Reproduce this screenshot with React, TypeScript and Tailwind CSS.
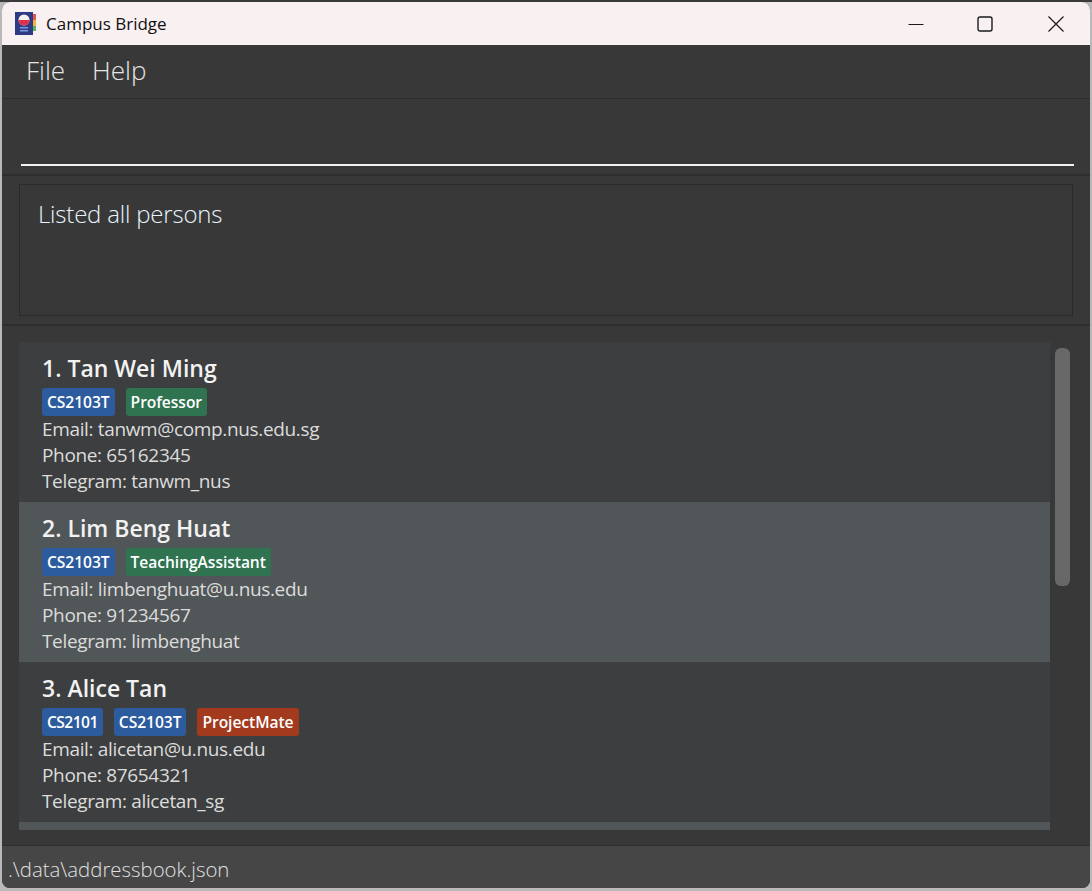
const font = { fontFamily: '"Open Sans", "Noto Sans", sans-serif' };

type Tag = { label: string; color: string; tight?: boolean };
type Person = { name: string; tags: Tag[]; email: string; phone: string; telegram: string };

const BLUE = "bg-[#2d5c9e]";
const GREEN = "bg-[#2f7350]";
const RED = "bg-[#a33a1e]";

const people: Person[] = [
  {
    name: "1. Tan Wei Ming",
    tags: [
      { label: "CS2103T", color: BLUE },
      { label: "Professor", color: GREEN },
    ],
    email: "tanwm@comp.nus.edu.sg",
    phone: "65162345",
    telegram: "tanwm_nus",
  },
  {
    name: "2. Lim Beng Huat",
    tags: [
      { label: "CS2103T", color: BLUE },
      { label: "TeachingAssistant", color: GREEN },
    ],
    email: "limbenghuat@u.nus.edu",
    phone: "91234567",
    telegram: "limbenghuat",
  },
  {
    name: "3. Alice Tan",
    tags: [
      { label: "CS2101", color: BLUE, tight: true },
      { label: "CS2103T", color: BLUE },
      { label: "ProjectMate", color: RED },
    ],
    email: "alicetan@u.nus.edu",
    phone: "87654321",
    telegram: "alicetan_sg",
  },
];

function AppIcon() {
  return (
    <svg width="21" height="24" viewBox="0 0 21 24" className="shrink-0">
      <rect x="0" y="0" width="18" height="23" fill="#2f3a85" />
      <rect x="18" y="2" width="3" height="6" fill="#e2574c" />
      <rect x="18" y="8" width="3" height="6" fill="#f2b33d" />
      <rect x="18" y="14" width="3" height="5" fill="#5bb35f" />
      <circle cx="9" cy="8" r="5.5" fill="#f5f0ee" />
      <path d="M3.5 8 a5.5 5.5 0 0 0 11 0 Z" fill="#e0304a" />
      <rect x="5" y="15" width="8" height="1.5" fill="#7f9be0" />
      <rect x="5" y="18" width="8" height="1.5" fill="#7f9be0" />
    </svg>
  );
}

function PersonCard({ person, selected }: { person: Person; selected: boolean }) {
  return (
    <div className={`h-[160px] pl-[23px] pt-[10px] ${selected ? "bg-[#515658]" : "bg-[#3c3e3f]"}`}>
      <div className="text-[23px] leading-[32px] font-semibold text-[#f2f2f2]">{person.name}</div>
      <div className="flex gap-[11px] mt-[4px]">
        {person.tags.map((t) => (
          <span
            key={t.label}
            className={`h-[28px] px-[5px] rounded-[3px] text-[15.6px] leading-[28px] font-semibold text-white ${
              t.tight ? "tracking-[-0.55px]" : "tracking-[-0.05px]"
            } ${t.color}`}
          >
            {t.label}
          </span>
        ))}
      </div>
      <div className="text-[19px] leading-[26px] text-[#dcdcdc] tracking-[-0.35px]">
        <div>Email: {person.email}</div>
        <div>Phone: {person.phone}</div>
        <div>Telegram: {person.telegram}</div>
      </div>
    </div>
  );
}

export default function App() {
  return (
    <div className="w-[1092px] h-[891px] overflow-hidden bg-[#b9b9b9]" style={font}>
      <div className="h-[2px] bg-[#3a3a3a]" />
      <div className="ml-[2px] w-[1088px] h-[886px] flex flex-col rounded-t-[8px] rounded-b-[8px] overflow-hidden bg-[#383838]">
        <div className="h-[43px] shrink-0 bg-[#f9f0f2] flex items-center pl-[13px]">
          <AppIcon />
          <span className="ml-[10px] text-[17px] text-[#111111]">Campus Bridge</span>
          <div className="ml-auto flex items-center">
            <svg width="16" height="16" viewBox="0 0 16 16" className="mr-[53px]">
              <path d="M0.5 8.5H15.5" stroke="#1a1a1a" strokeWidth="1" fill="none" />
            </svg>
            <svg width="16" height="16" viewBox="0 0 16 16" className="mr-[55px]">
              <rect x="1" y="1" width="14" height="14" rx="2" stroke="#1a1a1a" strokeWidth="1.4" fill="none" />
            </svg>
            <svg width="16" height="16" viewBox="0 0 16 16" className="mr-[26px]">
              <path d="M0.5 0.5L15.5 15.5M15.5 0.5L0.5 15.5" stroke="#1a1a1a" strokeWidth="1.2" fill="none" />
            </svg>
          </div>
        </div>

        <div className="h-[54px] shrink-0 flex items-center pl-[24px] pb-[2px] gap-[27px] text-[26px] font-light text-[#e6e6e6] border-b border-[#2c2c2c]">
          <span>File</span>
          <span>Help</span>
        </div>

        <div className="h-[77px] shrink-0 pl-[19px] pr-[16px] border-b-2 border-[#2e2e2e] flex items-end pb-[8px]">
          <div className="w-full h-[2px] bg-[#f2f2f2]" />
        </div>

        <div className="h-[150px] shrink-0 pt-[8px] px-[17px] pb-[8px] border-b-2 border-[#2e2e2e]">
          <div className="h-full border border-[#2a2a2a] pl-[18px] pt-[11px] text-[24px] leading-[36px] font-light text-[#e8f4ff] tracking-[-0.2px]">
            Listed all persons
          </div>
        </div>

        <div className="flex-1 min-h-0 relative pt-[16px] pl-[17px] pr-[40px] overflow-hidden">
          {people.map((p, i) => (
            <PersonCard key={p.name} person={p} selected={i === 1} />
          ))}
          <div className="h-[8px] bg-[#515658]" />
          <div className="absolute left-[1053px] top-[22px] w-[15px] h-[238px] rounded-[6px] bg-[#686868]" />
        </div>

        <div className="h-[43px] shrink-0 bg-[#464646] border-t border-[#2e2e2e] pl-[6px] text-[20.4px] leading-[46px] font-light text-[#e0e0e0]">
          .\data\addressbook.json
        </div>
      </div>
    </div>
  );
}
